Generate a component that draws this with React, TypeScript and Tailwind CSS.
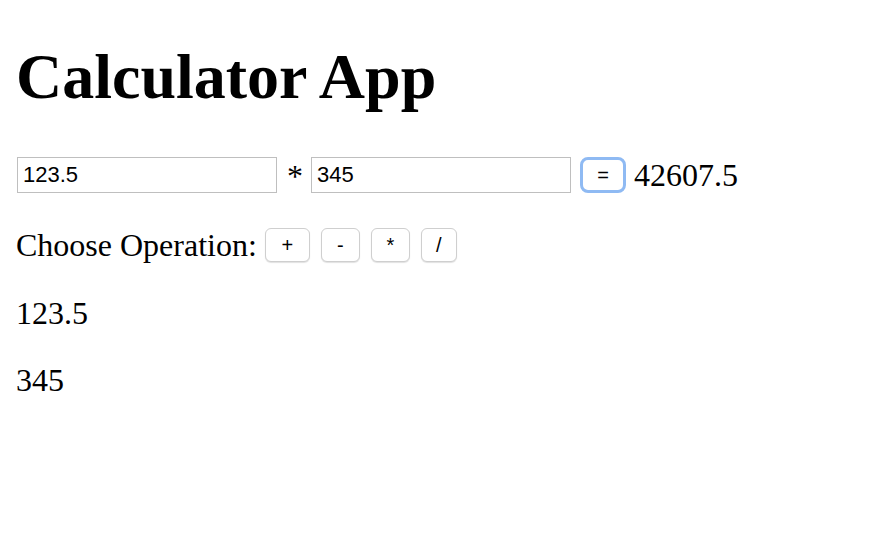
import React, { useState } from 'react';

type Op = '+' | '-' | '*' | '/';

const compute = (a: number, b: number, op: Op) => {
  if (op === '+') return a + b;
  if (op === '-') return a - b;
  if (op === '*') return a * b;
  return a / b;
};

export default function App() {
  const [first, setFirst] = useState('123.5');
  const [second, setSecond] = useState('345');
  const [op, setOp] = useState<Op>('*');
  const [result, setResult] = useState<number | null>(42607.5);

  const ops: { label: Op; w: string }[] = [
    { label: '+', w: 'w-[45px]' },
    { label: '-', w: 'w-[39px]' },
    { label: '*', w: 'w-[39px]' },
    { label: '/', w: 'w-[36px]' },
  ];

  return (
    <div className="min-h-[546px] bg-white px-4 font-['Liberation_Serif',serif] text-[32px] text-black">
      <h1 className="pt-[40px] pb-[43px] text-[64px] font-bold leading-[74px]">Calculator App</h1>

      <div className="flex h-[36px] items-center">
        <input
          value={first}
          onChange={(e) => setFirst(e.target.value)}
          className="ml-px h-[36px] w-[260px] border border-[#bfbfbf] px-[5px] font-['Liberation_Sans',sans-serif] text-[22px] outline-none"
        />
        <span className="ml-[10px] mr-[8px] mt-[2px] leading-none">{op}</span>
        <input
          value={second}
          onChange={(e) => setSecond(e.target.value)}
          className="h-[36px] w-[260px] border border-[#bfbfbf] px-[5px] font-['Liberation_Sans',sans-serif] text-[22px] outline-none"
        />
        <button
          onClick={() => setResult(compute(parseFloat(first), parseFloat(second), op))}
          className="ml-[9px] flex h-[36px] w-[46px] items-center justify-center rounded-[8px] border-[3px] border-[#8fbaf3] bg-white font-['Liberation_Sans',sans-serif] text-[20px] leading-none"
        >
          =
        </button>
        <span className="ml-[8px] leading-none">{result}</span>
      </div>

      <div className="mt-[33px] flex h-[37px] items-center">
        <span className="leading-none">Choose Operation:</span>
        <div className="ml-[8px] flex gap-[11px]">
          {ops.map((o) => (
            <button
              key={o.label}
              onClick={() => setOp(o.label)}
              className={`${o.w} flex h-[34px] items-center justify-center rounded-[6px] border border-[#cfcfcf] bg-white font-['Liberation_Sans',sans-serif] text-[20px] leading-none shadow-[0_1px_1px_rgba(0,0,0,0.12)]`}
            >
              {o.label}
            </button>
          ))}
        </div>
      </div>

      <p className="mt-[32px] leading-[37px]">{first}</p>
      <p className="mt-[30px] leading-[37px]">{second}</p>
    </div>
  );
}
